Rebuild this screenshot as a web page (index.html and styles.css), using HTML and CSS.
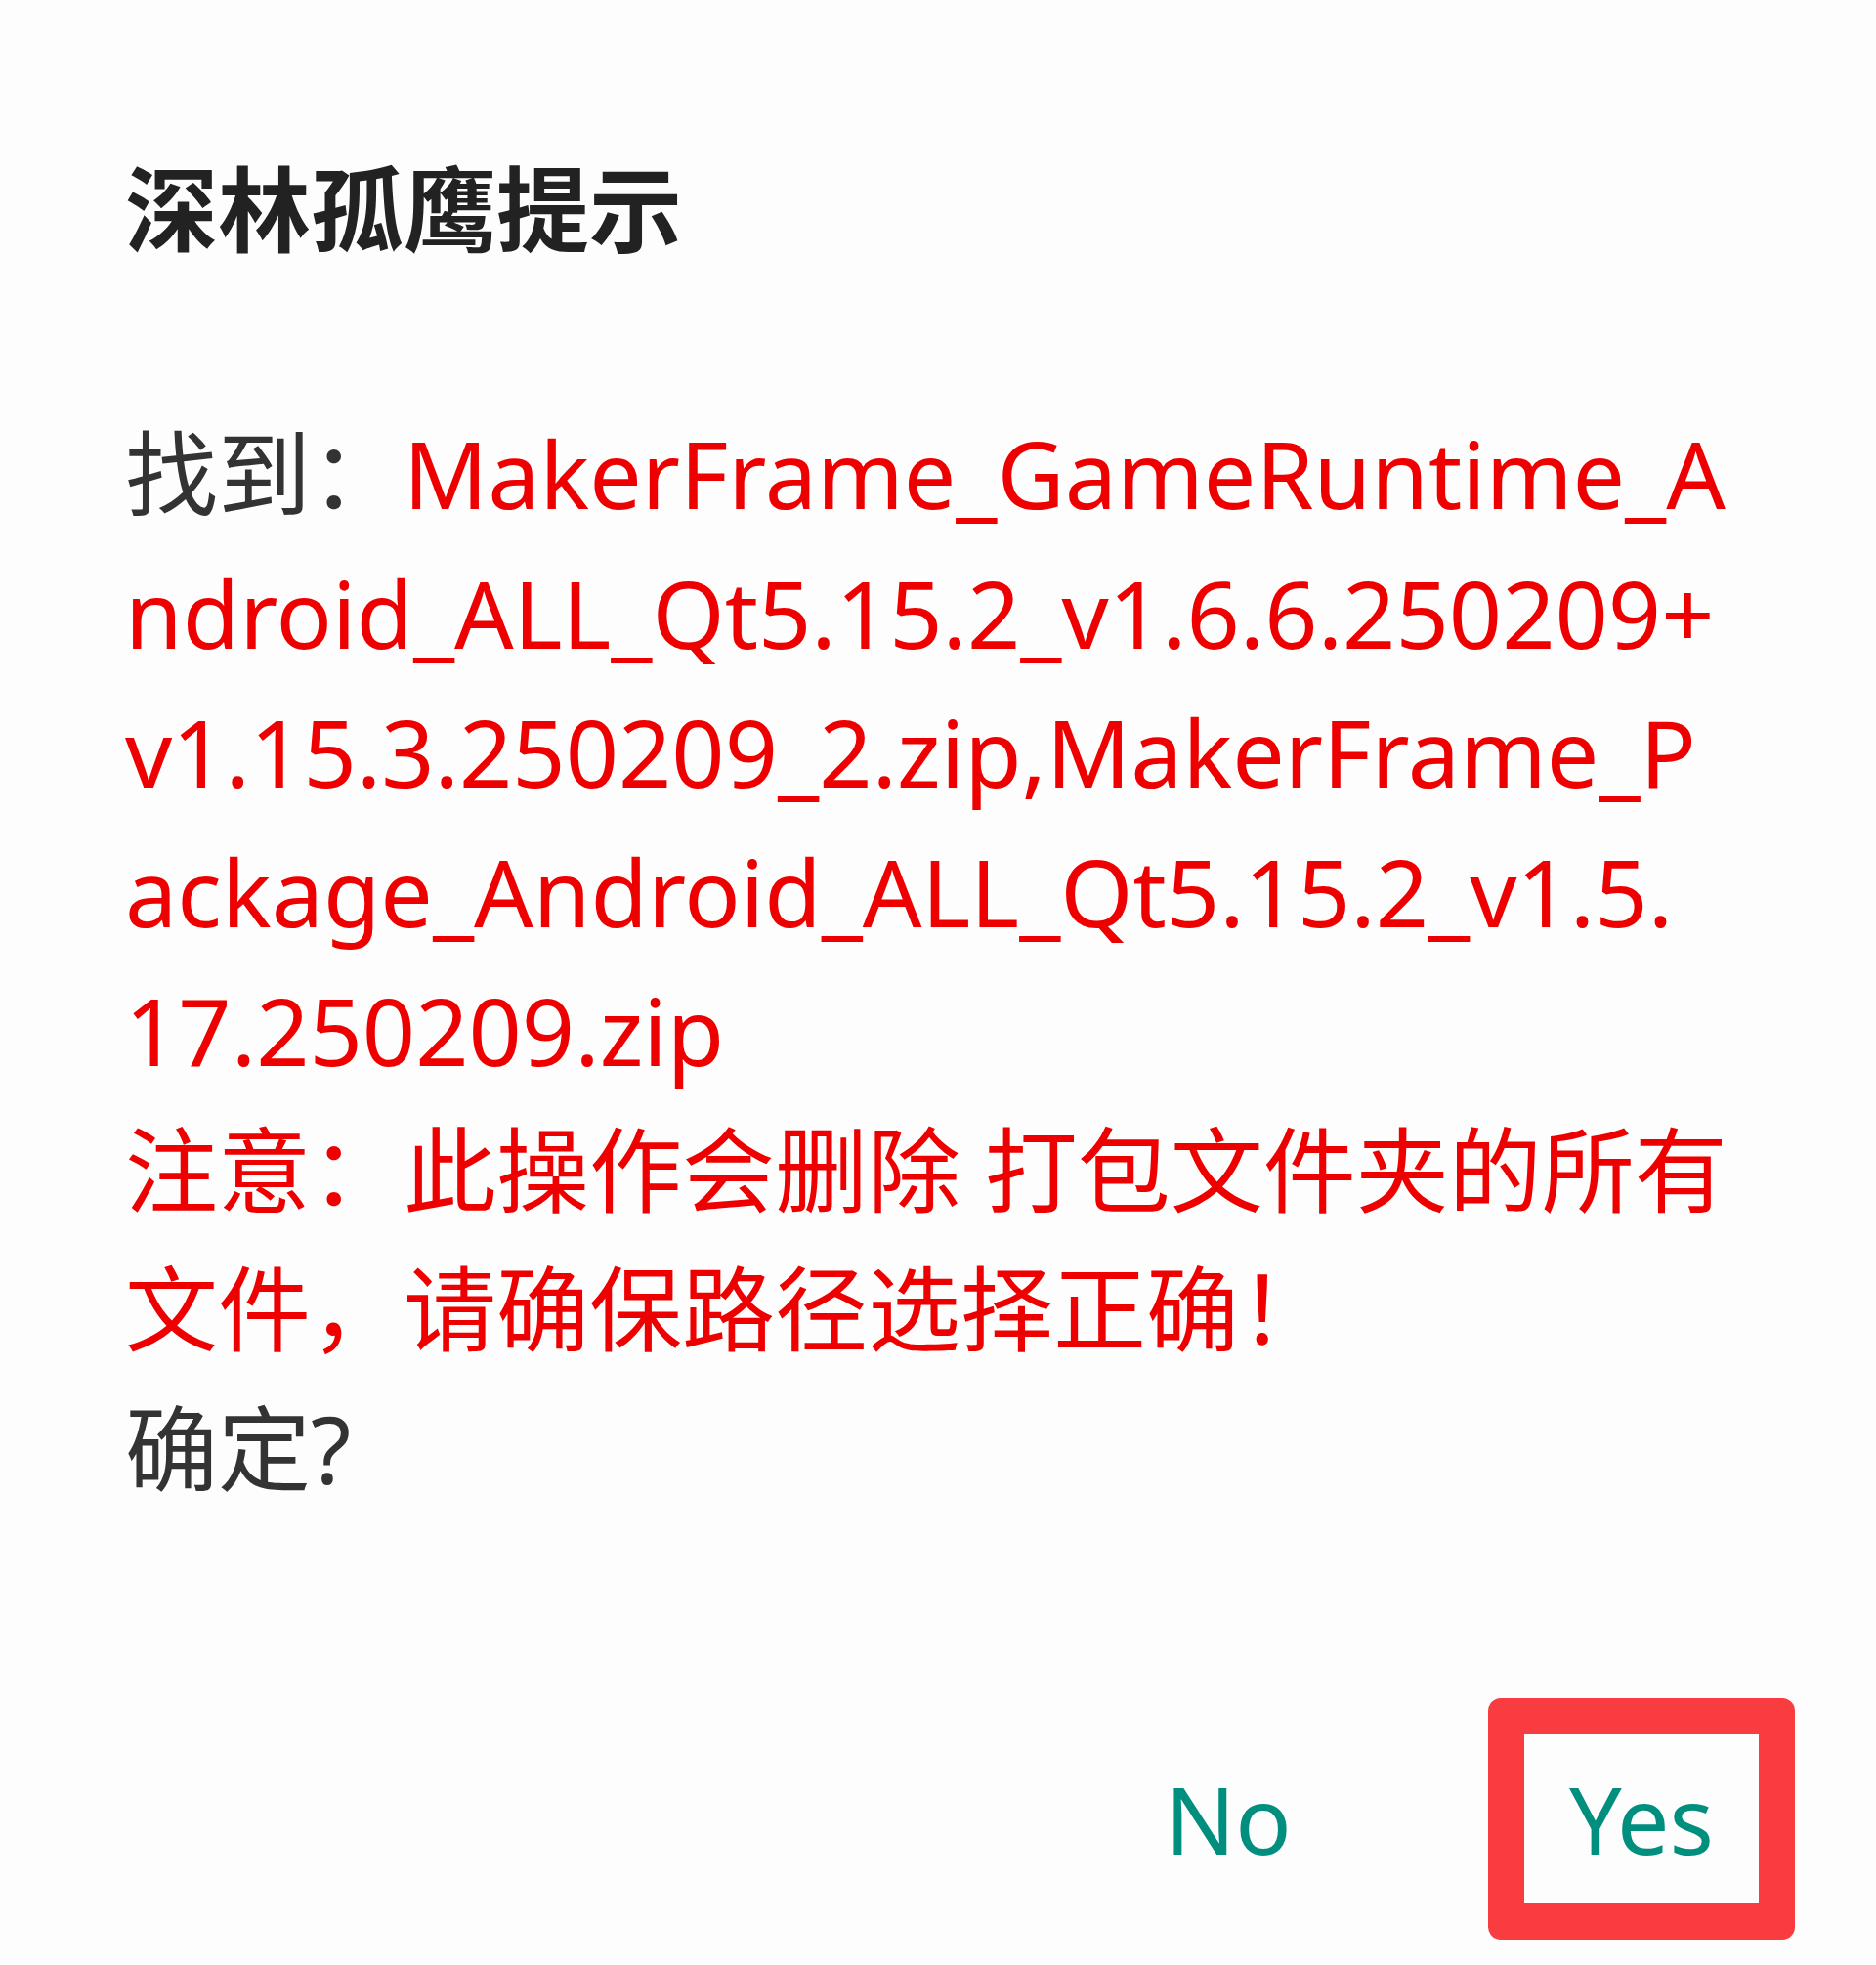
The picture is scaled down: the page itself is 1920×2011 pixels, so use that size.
FILE: index.html
```html
<!DOCTYPE html>
<html lang="zh-CN">
<head>
<meta charset="utf-8">
<title>深林孤鹰提示</title>
<link rel="stylesheet" href="styles.css">
</head>
<body>
<div class="dialog">
  <h1 class="title">深林孤鹰提示</h1>
  <p class="msg">找到：<span class="red">MakerFrame_GameRuntime_Android_ALL_Qt5.15.2_v1.6.6.250209+v1.15.3.250209_2.zip,MakerFrame_Package_Android_ALL_Qt5.15.2_v1.5.<span class="keep">17</span>.250209.zip</span><br><span class="red">注意：此操作会删除 打包文件夹的所有文件，请确保路径选择正确！</span><br>确定?</p>
  <div class="actions">
    <button class="btn">No</button>
    <button class="btn btn-yes">Yes</button>
  </div>
</div>
</body>
</html>
```

FILE: styles.css
```css
html, body {
  margin: 0;
  padding: 0;
  background: #fdfdfd;
}

body {
  font-family: "Noto Sans", "Noto Sans CJK SC", sans-serif;
  width: 1920px;
  height: 2011px;
  overflow: hidden;
}

.dialog {
  padding: 139px 150px 0 128px;
}

.title {
  margin: 0;
  font-family: "Noto Sans CJK SC", "Noto Sans", sans-serif;
  font-size: 95px;
  font-weight: 700;
  line-height: 142.5px;
  color: #222222;
}

.msg {
  margin: 131.5px 0 0 0;
  font-size: 95px;
  font-weight: 400;
  line-height: 142.5px;
  color: #333333;
  word-break: break-all;
}

.red {
  color: #ee0000;
}

.keep {
  white-space: nowrap;
}

.actions {
  display: flex;
  justify-content: flex-end;
  gap: 109px;
  margin: 185px -67px 0 0;
}

.btn {
  box-sizing: content-box;
  width: 240px;
  height: 173px;
  padding: 0;
  margin: 0;
  border: 37px solid transparent;
  border-radius: 13px;
  background: transparent;
  font-family: "Noto Sans", sans-serif;
  font-size: 95px;
  line-height: 173px;
  color: #008f7e;
  text-align: center;
}

.btn-yes {
  border-color: #f93c40;
}
```
